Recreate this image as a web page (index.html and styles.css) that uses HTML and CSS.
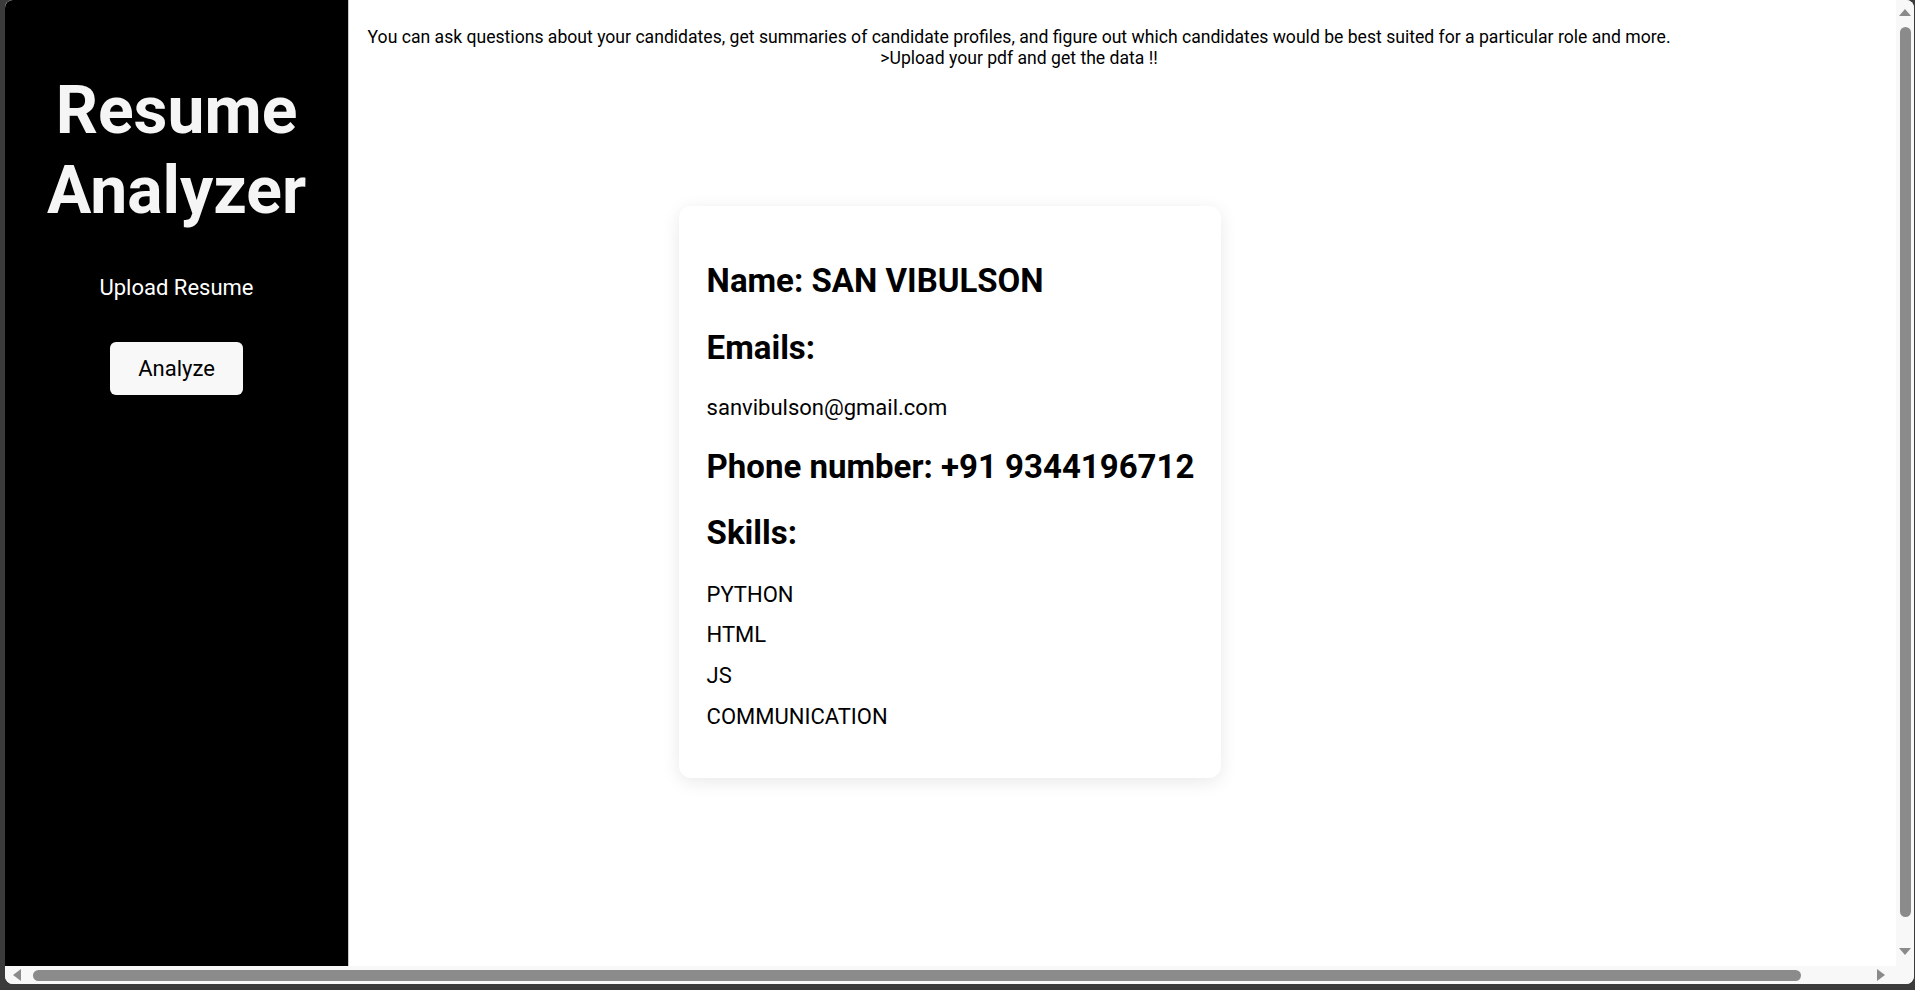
FILE: index.html
```html
<!DOCTYPE html>
<html lang="en">
<head>
<meta charset="utf-8">
<title>Resume Analyzer</title>
<link rel="stylesheet" href="styles.css">
</head>
<body>
<div class="window">
  <div class="viewport">
    <aside class="sidebar">
      <h1 class="title">Resume Analyzer</h1>
      <label class="upload">Upload Resume</label>
      <button class="analyze" type="button">Analyze</button>
    </aside>
    <main class="main">
      <p class="intro">You can ask questions about your candidates, get summaries of candidate profiles, and figure out which candidates would be best suited for a particular role and more.<br>&gt;Upload your pdf and get the data !!</p>
      <section class="card">
        <h2 class="card-heading">Name: SAN VIBULSON</h2>
        <h2 class="card-heading">Emails:</h2>
        <p class="card-text">sanvibulson@gmail.com</p>
        <h2 class="card-heading">Phone number: +91 9344196712</h2>
        <h2 class="card-heading">Skills:</h2>
        <ul class="skills">
          <li>PYTHON</li>
          <li>HTML</li>
          <li>JS</li>
          <li>COMMUNICATION</li>
        </ul>
      </section>
    </main>
  </div>
  <div class="vscroll">
    <span class="arrow arrow-up"></span>
    <span class="vthumb"></span>
    <span class="arrow arrow-down"></span>
  </div>
  <div class="hscroll">
    <span class="arrow arrow-left"></span>
    <span class="hthumb"></span>
    <span class="arrow arrow-right"></span>
  </div>
  <div class="corner"></div>
</div>
</body>
</html>
```

FILE: styles.css
```css
* {
  box-sizing: border-box;
}

html, body {
  margin: 0;
  padding: 0;
}

body {
  width: 1915px;
  height: 990px;
  overflow: hidden;
  background: #3b3b3b;
  font-family: Roboto, "Liberation Sans", Arial, sans-serif;
  color: #000;
}

.window {
  margin-left: 5px;
  width: 1909px;
  height: 984px;
  border-radius: 8px;
  overflow: hidden;
  display: grid;
  grid-template-columns: 1fr 18px;
  grid-template-rows: 1fr 18px;
  background: #f8f8f8;
}

.viewport {
  display: flex;
  overflow: hidden;
  background: #fff;
}

/* Sidebar */
.sidebar {
  flex: 0 0 344px;
  background: #000;
  border-right: 1px solid #c8c8c8;
  display: flex;
  flex-direction: column;
  align-items: center;
  padding-top: 71px;
}

.title {
  margin: 0;
  font-size: 66px;
  line-height: 80px;
  font-weight: 700;
  color: #f5f5f5;
  text-align: center;
}

.upload {
  margin-top: 44px;
  font-size: 22px;
  line-height: 26px;
  color: #fff;
}

.analyze {
  margin-top: 41px;
  width: 133px;
  height: 53px;
  border: none;
  border-radius: 6px;
  background: #f8f8f8;
  font-family: Roboto, "Liberation Sans", Arial, sans-serif;
  font-size: 22px;
  color: #000;
  padding: 0;
}

/* Main */
.main {
  flex: 1;
  display: flex;
  flex-direction: column;
  align-items: flex-start;
  padding: 27px 0 0 18.6px;
}

.intro {
  margin: 0;
  font-size: 17.6px;
  line-height: 20.7px;
  text-align: center;
}

.card {
  margin: 138px 0 0 311px;
  width: 542px;
  padding: 28px 22px 33px 28px;
  background: #fff;
  border-radius: 12px;
  box-shadow: 0 4px 18px rgba(0, 0, 0, 0.09);
}

.card-heading {
  margin: 27.5px 0;
  font-size: 33px;
  font-weight: 700;
  line-height: 38.7px;
  white-space: nowrap;
}

.card-heading:first-child {
  margin-top: 28px;
}

.card-text {
  margin: 22px 0;
  font-size: 22px;
  line-height: 25.8px;
}

.skills {
  list-style: none;
  margin: 28.5px 0 0;
  padding: 0;
  font-size: 22px;
  line-height: 25.8px;
}

.skills li {
  margin-bottom: 15px;
}

/* Scrollbars */
.vscroll {
  background: #f8f8f8;
  display: flex;
  flex-direction: column;
  align-items: center;
  padding-top: 9px;
}

.vthumb {
  margin-top: 11px;
  width: 11px;
  height: 890px;
  border-radius: 6px;
  background: #8b8b8b;
}

.arrow {
  width: 0;
  height: 0;
  display: block;
}

.arrow-up {
  border-left: 6px solid transparent;
  border-right: 6px solid transparent;
  border-bottom: 7px solid #8b8b8b;
}

.arrow-down {
  margin-top: 31px;
  border-left: 6px solid transparent;
  border-right: 6px solid transparent;
  border-top: 7px solid #8b8b8b;
}

.hscroll {
  background: #f8f8f8;
  display: flex;
  align-items: center;
  padding-left: 8px;
}

.arrow-left {
  border-top: 6px solid transparent;
  border-bottom: 6px solid transparent;
  border-right: 8px solid #8b8b8b;
}

.hthumb {
  margin-left: 12px;
  width: 1768px;
  height: 11px;
  border-radius: 6px;
  background: #8b8b8b;
}

.arrow-right {
  margin-left: 76px;
  border-top: 6px solid transparent;
  border-bottom: 6px solid transparent;
  border-left: 8px solid #8b8b8b;
}

.corner {
  background: #f8f8f8;
}
```
